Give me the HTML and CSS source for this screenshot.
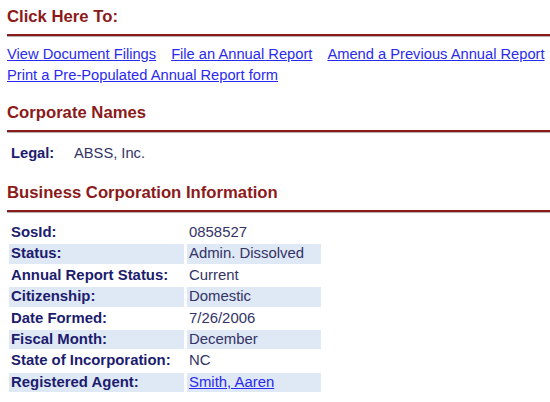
FILE: index.html
```html
<!DOCTYPE html>
<html>
<head>
<meta charset="utf-8">
<link rel="stylesheet" href="styles.css">
</head>
<body>
<div class="page">
  <h2 class="section-title">Click Here To:</h2>
  <div class="links">
    <div class="link-row">
      <a href="#">View Document Filings</a>
      <a href="#">File an Annual Report</a>
      <a href="#">Amend a Previous Annual Report</a>
    </div>
    <div class="link-row">
      <a href="#">Print a Pre-Populated Annual Report form</a>
    </div>
  </div>

  <h2 class="section-title">Corporate Names</h2>
  <div class="names">
    <span class="label">Legal:</span>
    <span class="value">ABSS, Inc.</span>
  </div>

  <h2 class="section-title">Business Corporation Information</h2>
  <table class="info">
    <tr><td class="label">SosId:</td><td class="value">0858527</td></tr>
    <tr class="alt"><td class="label">Status:</td><td class="value">Admin. Dissolved</td></tr>
    <tr><td class="label">Annual Report Status:</td><td class="value">Current</td></tr>
    <tr class="alt"><td class="label">Citizenship:</td><td class="value">Domestic</td></tr>
    <tr><td class="label">Date Formed:</td><td class="value">7/26/2006</td></tr>
    <tr class="alt"><td class="label">Fiscal Month:</td><td class="value">December</td></tr>
    <tr><td class="label">State of Incorporation:</td><td class="value">NC</td></tr>
    <tr class="alt"><td class="label">Registered Agent:</td><td class="value"><a href="#">Smith, Aaren</a></td></tr>
  </table>
</div>
</body>
</html>
```

FILE: styles.css
```css
html, body {
  margin: 0;
  padding: 0;
  background: #ffffff;
}
body {
  font-family: "Liberation Sans", Arial, sans-serif;
  font-size: 14.7px;
}
.page {
  padding: 7px 0 0 7px;
}
.section-title {
  margin: 0;
  font-size: 16.7px;
  font-weight: bold;
  color: #8b1a1a;
  line-height: 19px;
  padding-bottom: 8px;
  border-bottom: 2px solid #8b1a1a;
  box-shadow: 0 1px 0 #b0b0b0;
}
.links {
  padding: 8px 0 17px 0;
  line-height: 21px;
}
.link-row {
  display: flex;
  gap: 15px;
}
a {
  color: #2a2aee;
  text-decoration: underline;
}
.names {
  padding: 11px 0 20px 4px;
  line-height: 20px;
  display: flex;
}
.names .label {
  font-weight: bold;
  color: #1c1c6e;
  width: 63px;
}
.names .value {
  color: #333366;
}
.info {
  border-collapse: separate;
  border-spacing: 3px 2px;
  margin: 9px 0 0 -1px;
  line-height: 19.4px;
  font-size: 14.9px;
}
.info td {
  padding: 0 2px;
}
.info .label {
  font-weight: bold;
  color: #1c1c6e;
  width: 171px;
}
.info .value {
  color: #333366;
  width: 130px;
}
.info tr.alt td {
  background: #dfe8f5;
}
```
